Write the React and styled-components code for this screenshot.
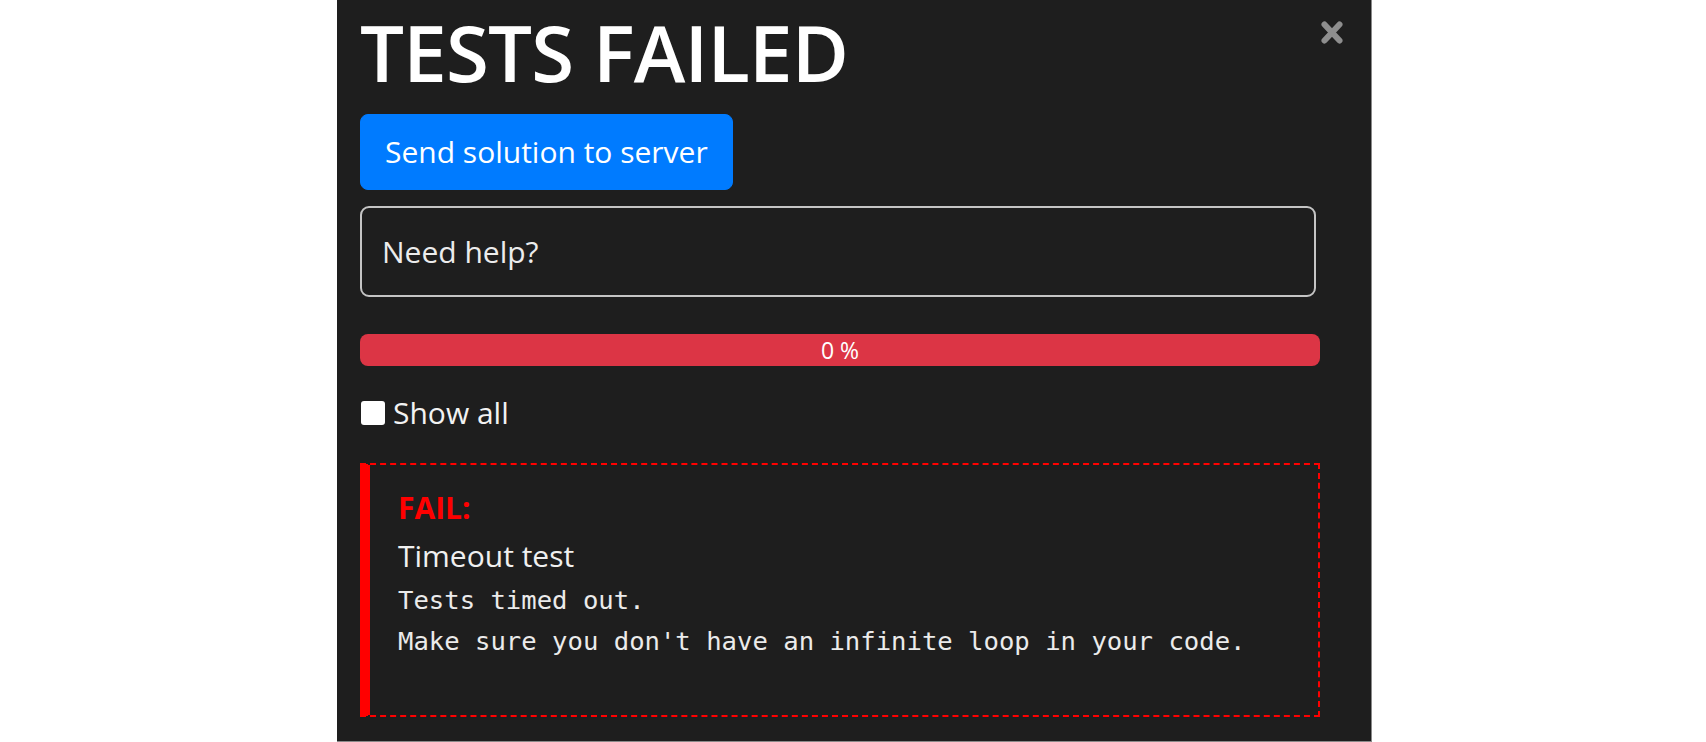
import React from "react";
import styled, { createGlobalStyle } from "styled-components";

const Global = createGlobalStyle`
  html, body { margin: 0; padding: 0; background: #ffffff; }
  body { font-family: "Open Sans", "Noto Sans", sans-serif; }
  * { box-sizing: border-box; }
`;

const Page = styled.div`
  display: flex;
  padding-left: 337px;
  height: 742px;
  overflow: hidden;
`;

const Panel = styled.section`
  position: relative;
  width: 1035px;
  height: 742px;
  background: #1e1e1e;
  border-right: 1px solid #8a8a8a;
  border-bottom: 1px solid #8a8a8a;
  padding: 0 51px 0 23px;
  display: flex;
  flex-direction: column;
  color: #f2f2f2;
`;

const CloseButton = styled.button`
  position: absolute;
  top: 20px;
  right: 27px;
  width: 24px;
  height: 25px;
  padding: 0;
  border: 0;
  background: transparent;
  color: #8e8e8e;
  cursor: pointer;
  svg { display: block; }
`;

const Title = styled.h1`
  margin: 4px 0 0;
  font-size: 78px;
  font-weight: 600;
  line-height: 96px;
  color: #ffffff;
  letter-spacing: -0.8px;
`;

const PrimaryButton = styled.button`
  align-self: flex-start;
  margin-top: 14px;
  height: 76px;
  padding: 12px 24px;
  border: 1px solid #007bff;
  border-radius: 8px;
  background: #007bff;
  color: #ffffff;
  font-family: inherit;
  font-size: 30px;
  line-height: 48px;
  cursor: pointer;
`;

const HelpBox = styled.button`
  display: flex;
  align-items: center;
  margin: 16px 4px 0 0;
  height: 91px;
  padding: 0 20px;
  border: 2px solid #c4c4c4;
  border-radius: 9px;
  background: transparent;
  color: #ececec;
  font-family: inherit;
  font-size: 30px;
  line-height: 48px;
  text-align: left;
`;

const Progress = styled.div`
  margin-top: 37px;
  height: 32px;
  border-radius: 8px;
  background: #dc3545;
  color: #ffffff;
  display: flex;
  align-items: center;
  justify-content: center;
  font-size: 23px;
  font-weight: 500;
  line-height: 32px;
`;

const CheckRow = styled.label`
  display: flex;
  align-items: center;
  gap: 8px;
  margin-top: 23px;
  font-size: 30px;
  line-height: 48px;
  color: #f2f2f2;
`;

const Check = styled.input`
  appearance: none;
  width: 24px;
  height: 24px;
  margin: 0 0 0 1px;
  background: #ffffff;
  border-radius: 3px;
  border: 0;
`;

const FailCard = styled.div`
  margin-top: 26px;
  height: 254px;
  border: 2px dashed #ff0000;
  border-left: 10px solid #ff0000;
  padding: 19px 20px 0 28px;
`;

const FailLabel = styled.div`
  color: #ff0000;
  font-weight: 700;
  font-size: 30px;
  line-height: 48px;
`;

const TestName = styled.div`
  color: #f0f0f0;
  font-size: 30px;
  line-height: 48px;
`;

const Output = styled.pre`
  margin: 0;
  font-family: "DejaVu Sans Mono", "Liberation Mono", monospace;
  font-size: 25.6px;
  line-height: 41px;
  color: #ebebeb;
  white-space: pre;
`;

export default function App() {
  return (
    <>
      <Global />
      <Page>
        <Panel>
          <CloseButton aria-label="Close">
            <svg width="24" height="25" viewBox="0 0 24 25">
              <path
                d="M4.5 4.5 L19.5 20.5 M19.5 4.5 L4.5 20.5"
                stroke="currentColor"
                strokeWidth="6"
                strokeLinecap="round"
              />
            </svg>
          </CloseButton>
          <Title>TESTS FAILED</Title>
          <PrimaryButton>Send solution to server</PrimaryButton>
          <HelpBox>Need help?</HelpBox>
          <Progress>0 %</Progress>
          <CheckRow>
            <Check type="checkbox" />
            Show all
          </CheckRow>
          <FailCard>
            <FailLabel>FAIL:</FailLabel>
            <TestName>Timeout test</TestName>
            <Output>{"Tests timed out.\nMake sure you don't have an infinite loop in your code."}</Output>
          </FailCard>
        </Panel>
      </Page>
    </>
  );
}
